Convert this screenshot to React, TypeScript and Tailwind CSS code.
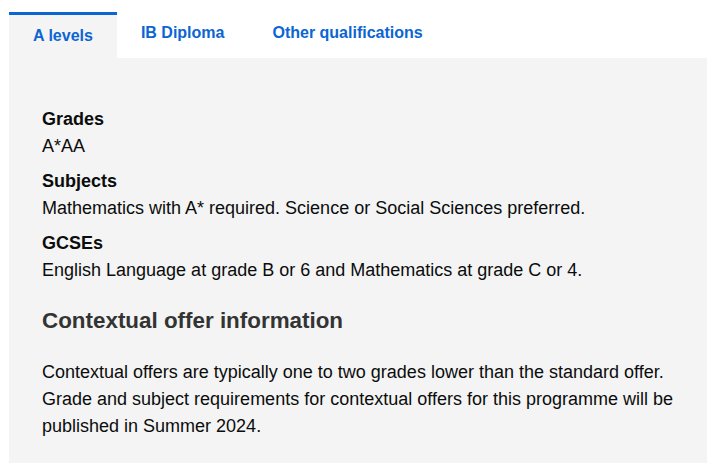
import { useState } from "react";

const TABS = ["A levels", "IB Diploma", "Other qualifications"];

const REQUIREMENTS = [
  { label: "Grades", value: "A*AA" },
  {
    label: "Subjects",
    value: "Mathematics with A* required. Science or Social Sciences preferred.",
  },
  {
    label: "GCSEs",
    value: "English Language at grade B or 6 and Mathematics at grade C or 4.",
  },
];

export default function App() {
  const [active, setActive] = useState(0);

  return (
    <div className="min-h-screen bg-white pt-3 pl-[9px] pr-2 font-['Liberation_Sans',Arial,sans-serif] text-[#0b0c0c]">
      <div className="flex items-start">
        {TABS.map((tab, i) =>
          i === active ? (
            <button
              key={tab}
              type="button"
              onClick={() => setActive(i)}
              className="border-t-[3px] border-[#0b65d3] bg-[#f4f4f4] px-6 pt-[9px] pb-[10px] text-base leading-6 font-bold text-[#0b65d3]"
            >
              {tab}
            </button>
          ) : (
            <button
              key={tab}
              type="button"
              onClick={() => setActive(i)}
              className="px-6 pt-[9px] text-base leading-6 font-bold text-[#0b65d3]"
            >
              {tab}
            </button>
          ),
        )}
      </div>

      <div className="bg-[#f4f4f4] px-[33px] pt-[48px] pb-[23px]">
        <dl>
          {REQUIREMENTS.map((r) => (
            <div key={r.label} className="mb-2">
              <dt className="text-lg leading-[27px] font-bold">{r.label}</dt>
              <dd className="text-lg leading-[27px]">{r.value}</dd>
            </div>
          ))}
        </dl>

        <h3 className="mt-[22px] text-[22.4px] leading-[30px] font-bold text-[#333]">
          Contextual offer information
        </h3>
        <p className="mt-[23px] text-lg leading-[27px]">
          Contextual offers are typically one to two grades lower than the
          standard offer. Grade and subject requirements for contextual offers
          for this programme will be published in Summer 2024.
        </p>
      </div>
    </div>
  );
}
